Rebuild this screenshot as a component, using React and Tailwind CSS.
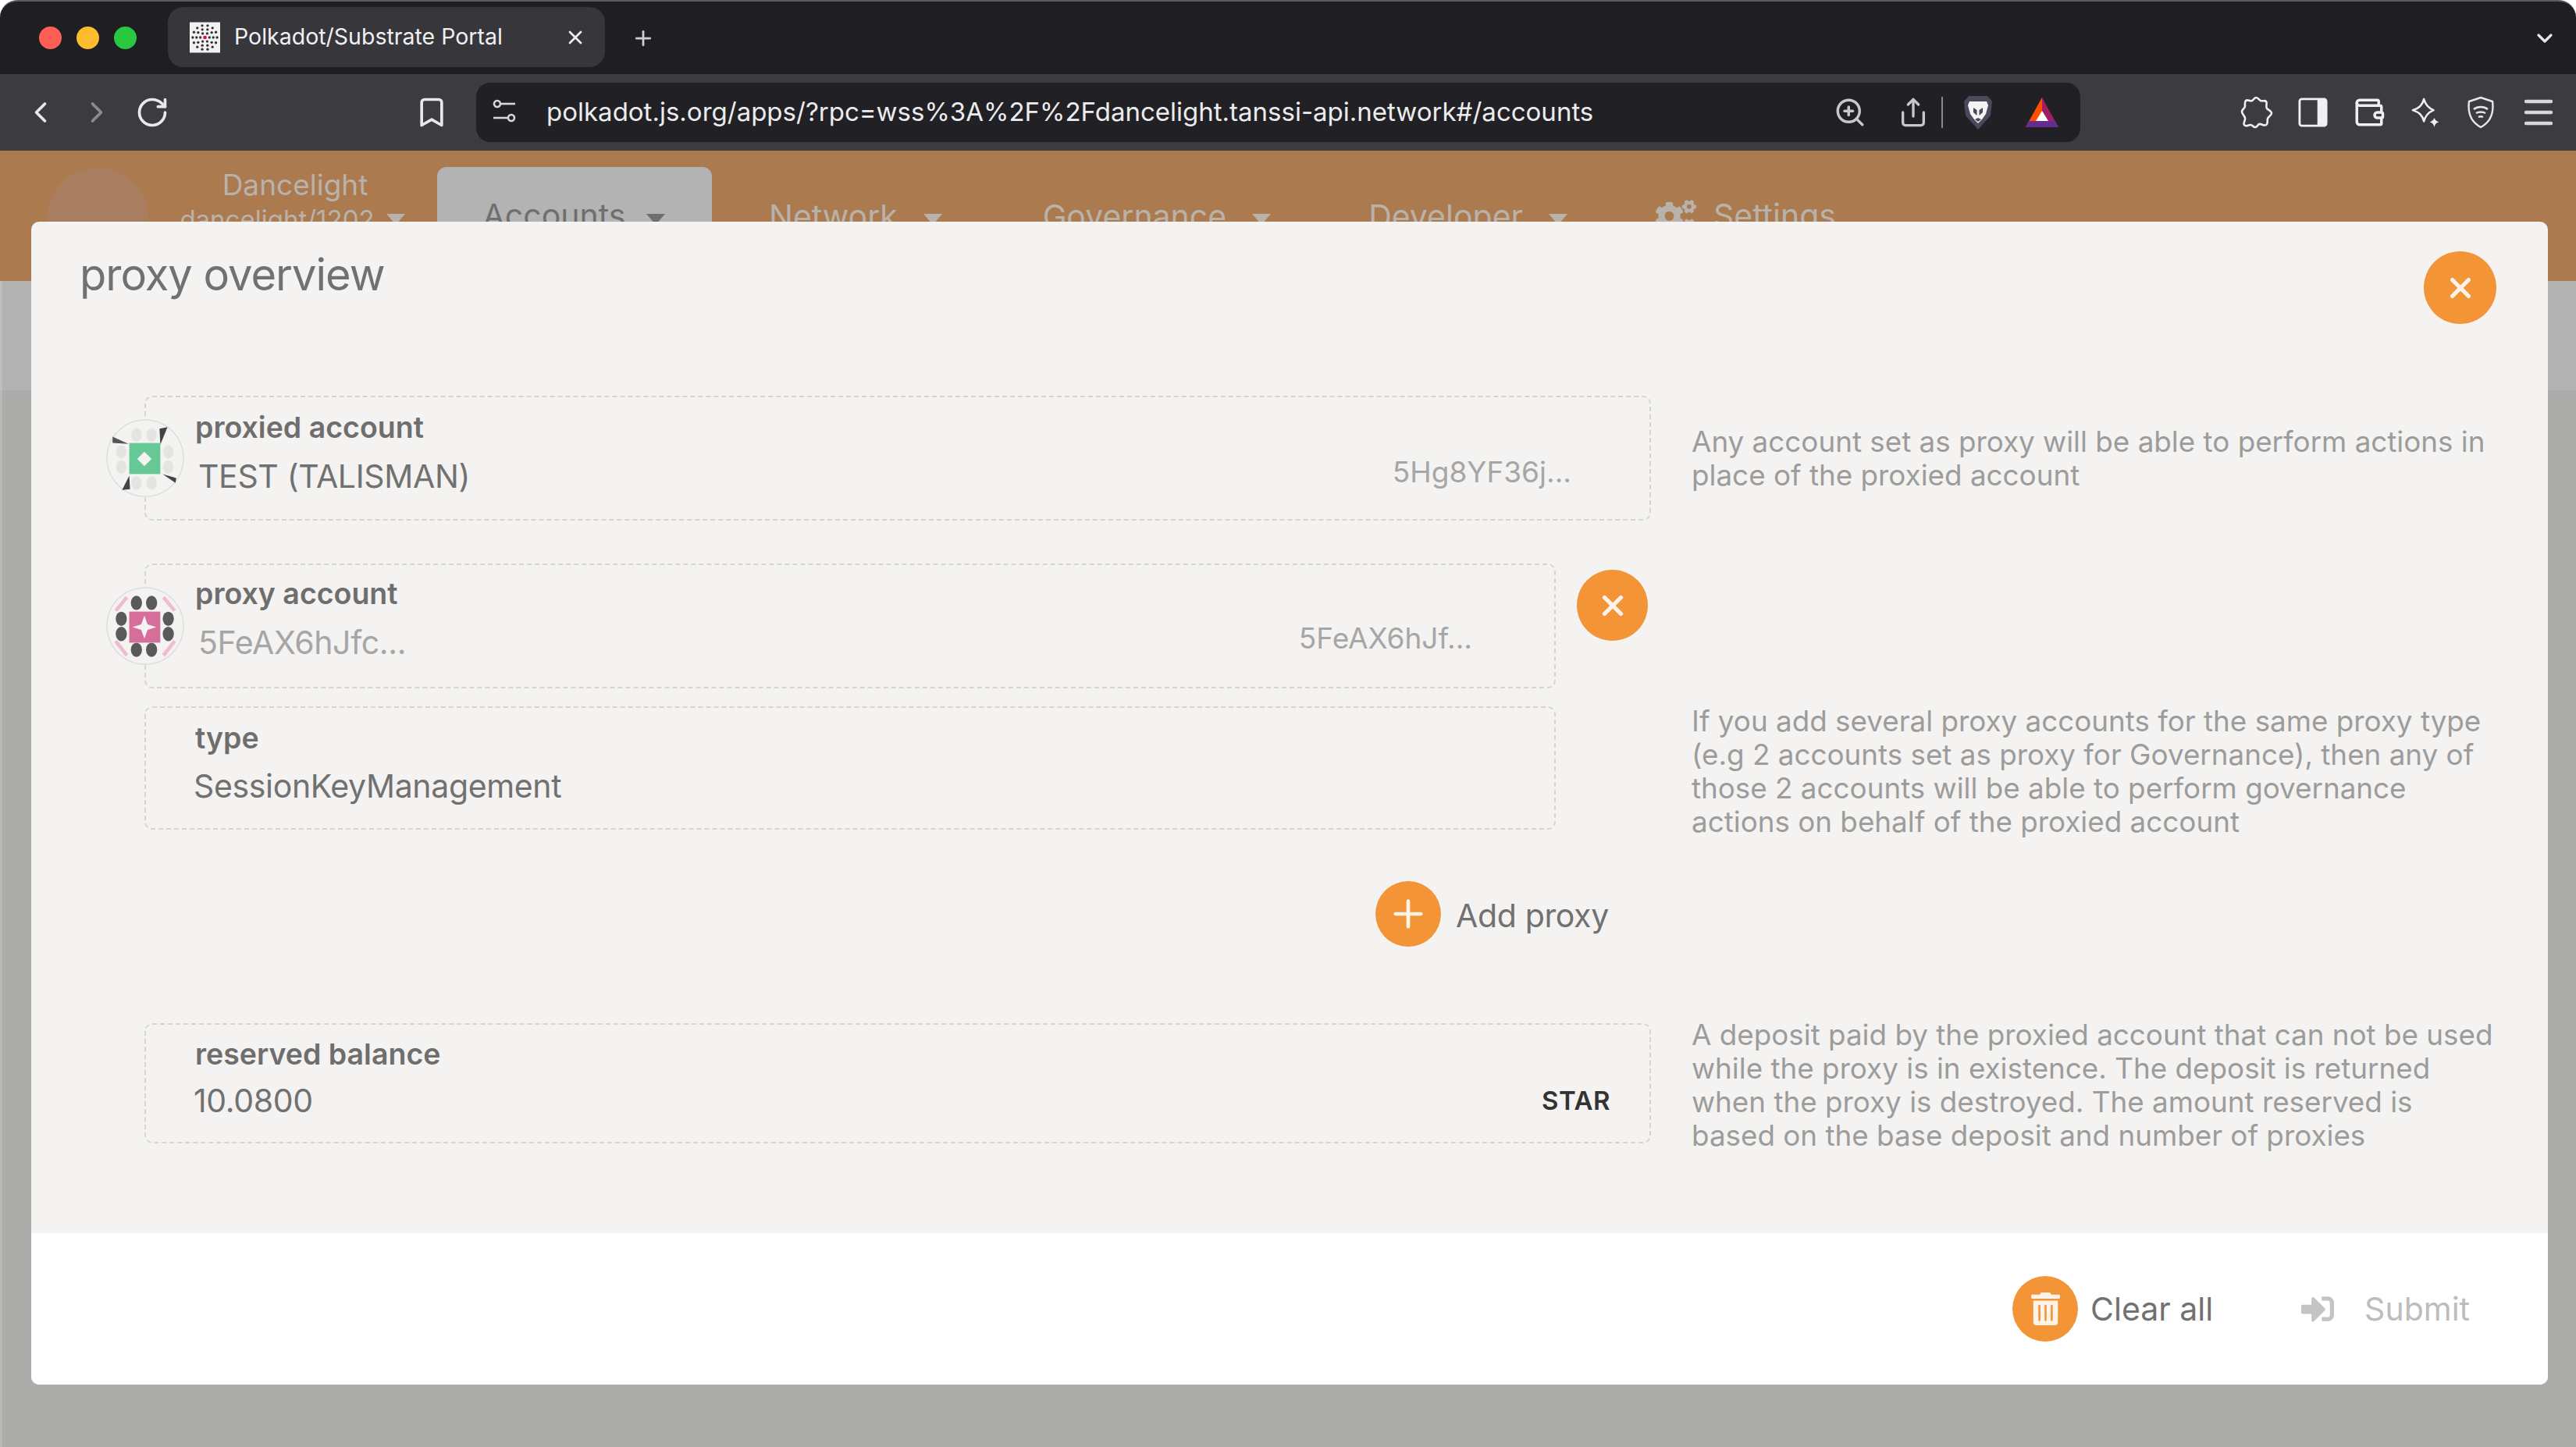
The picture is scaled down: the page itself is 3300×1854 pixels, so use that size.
import { ChevronLeft, ChevronRight, RotateCw, Bookmark, ZoomIn, Share, Wallet, Menu, X, Plus, ChevronDown } from 'lucide-react'
import { FaTrashAlt, FaSignInAlt, FaCogs } from 'react-icons/fa'

const FONT = "font-['Inter','Noto_Sans',sans-serif]"

function Caret({ className }) {
  return (
    <svg viewBox="0 0 24 14" className={className}>
      <path d="M0 0H24L12 14Z" fill="currentColor" />
    </svg>
  )
}

function Favicon() {
  const dots = []
  for (let r = 0; r < 3; r++) {
    const count = [6, 10, 14][r]
    for (let i = 0; i < count; i++) {
      const a = (i / count) * Math.PI * 2
      dots.push(<circle key={`${r}-${i}`} cx={20 + Math.cos(a) * (6 + r * 5)} cy={20 + Math.sin(a) * (6 + r * 5)} r="1.7" fill="#333" />)
    }
  }
  return (
    <svg viewBox="0 0 40 40" className="h-[40px] w-[39px]">
      <rect width="40" height="40" fill="#f2f2f2" />
      {dots}
      <circle cx="20" cy="20" r="2.4" fill="#e6007a" />
    </svg>
  )
}

function SiteSettingsIcon() {
  return (
    <svg viewBox="0 0 32 36" className="h-[36px] w-[32px]" fill="none" stroke="#d8d8d8" strokeWidth="2.6">
      <circle cx="7" cy="7" r="4" />
      <path d="M12 7H30" />
      <path d="M2 25H20" />
      <circle cx="25" cy="25" r="4" />
    </svg>
  )
}

function BraveIcon() {
  return (
    <svg viewBox="0 0 36 44" className="h-[44px] w-[36px]">
      <path d="M6 1H30L36 8L34 26L18 44L2 26L0 8Z" fill="#4a4a5c" />
      <path d="M7 8H29L31 13L28 24L23 31L18 36L13 31L8 24L5 13Z" fill="#f4f4f4" />
      <path d="M12 16L16.5 19V26L12 22ZM24 16L19.5 19V26L24 22Z" fill="#4a4a5c" />
      <path d="M14 31L18 29L22 31L18 34Z" fill="#4a4a5c" />
    </svg>
  )
}

function BatIcon() {
  return (
    <svg viewBox="0 0 42 38" className="h-[38px] w-[42px]">
      <path d="M21 0L42 38H0Z" fill="#9e1f63" />
      <path d="M21 0L0 38H12L21 20Z" fill="#ff5000" />
      <path d="M0 38L4 30H38L42 38Z" fill="#662d91" />
      <path d="M21 17L29 30H13Z" fill="#ffffff" />
    </svg>
  )
}

function ExtensionsIcon() {
  return (
    <svg viewBox="0 0 42 42" className="h-[42px] w-[42px]" fill="none" stroke="#f0f0f2" strokeWidth="2.6" strokeLinejoin="round">
      <path d="M15 6C17 5 18 2 20 2C23 2 24 5 26 6C29 7 31 5 33 7C35 9 32 13 34 16C36 18 40 19 40 22C40 25 36 26 35 29C34 32 36 35 33 37C30 39 27 35 24 36C22 37 22 40 19 40C16 40 16 37 13 37C10 37 7 40 5 37C3 35 7 31 6 28C5 25 2 23 2 20C2 17 6 16 6 13C6 10 5 8 7 6C9 4 12 7 15 6Z" />
    </svg>
  )
}

function SidebarIcon() {
  return (
    <svg viewBox="0 0 40 40" className="h-[38px] w-[38px]">
      <rect x="2" y="2" width="36" height="36" rx="3" fill="none" stroke="#f0f0f2" strokeWidth="3" />
      <rect x="26" y="2" width="12" height="36" fill="#f0f0f2" />
    </svg>
  )
}

function SparkleIcon() {
  return (
    <svg viewBox="0 0 42 42" className="h-[40px] w-[40px]" fill="none" stroke="#f0f0f2" strokeWidth="2.6">
      <path d="M18 3C20 11 24 15 31 18C24 21 20 25 18 33C16 25 12 21 3 18C12 15 16 11 18 3Z" strokeLinejoin="round" />
      <path d="M32 28C33 31 34 32 38 34C34 35 33 37 32 41C31 37 30 35 26 34C30 32 31 31 32 28Z" fill="#f0f0f2" stroke="none" />
    </svg>
  )
}

function ShieldWifiIcon() {
  return (
    <svg viewBox="0 0 36 42" className="h-[42px] w-[36px]" fill="none" stroke="#e8e8ea" strokeWidth="2.4">
      <path d="M18 2L33 7C35 22 31 33 18 40C5 33 1 22 3 7Z" strokeLinejoin="round" />
      <path d="M9 17C14 13 22 13 27 17" />
      <path d="M12 22C15 20 21 20 24 22" />
      <path d="M15 27C17 26 19 26 21 27" />
    </svg>
  )
}

// Polkadot identicons, drawn as in the picture
function GreenIdenticon() {
  return (
    <svg viewBox="0 0 98 98" className="h-full w-full">
      <circle cx="49" cy="49" r="48" fill="#f4f3f1" stroke="#dddddb" strokeWidth="1.4" />
      {[[38, 20], [57, 20], [19, 41], [19, 60], [78, 41], [78, 60], [38, 80], [57, 80]].map(([x, y]) => (
        <ellipse key={`${x}-${y}`} cx={x} cy={y} rx="6.5" ry="8.5" fill="#e4e4e3" />
      ))}
      <path d="M8 22L28 31L8 30Z" fill="#555555" />
      <path d="M77 10L67 12L68 32Z" fill="#444444" />
      <path d="M71 69L88 74L87 80Z" fill="#444444" />
      <path d="M29 71L20 89L30 88Z" fill="#444444" />
      <rect x="29" y="30" width="39" height="39" fill="#66c995" />
      <path d="M48 41L57 50L48 59L39 50Z" fill="#f4f3f1" />
    </svg>
  )
}

function PinkIdenticon() {
  return (
    <svg viewBox="0 0 98 98" className="h-full w-full">
      <circle cx="49" cy="49" r="48" fill="#f4f3f1" stroke="#dddddb" strokeWidth="1.4" />
      <path d="M12 30L26 13M86 30L72 13M12 68L26 86M86 68L72 86" stroke="#efbccf" strokeWidth="4.5" />
      {[[38, 20], [57, 20], [19, 40], [19, 59], [78, 40], [78, 59], [38, 79], [57, 79]].map(([x, y]) => (
        <ellipse key={`${x}-${y}`} cx={x} cy={y} rx="7" ry="9" fill="#5a5a5a" />
      ))}
      <rect x="29" y="31" width="39" height="39" fill="#d56f99" />
      <path d="M48 36L52 47L63 50.5L52 54L48 65L44 54L33 50.5L44 47Z" fill="#f4f3f1" />
    </svg>
  )
}

function NavItem({ label, className }) {
  return (
    <div className={`flex items-center text-[41px] leading-[50px] text-[#b9b2ab] ${className}`}>
      <span>{label}</span>
      <Caret className="ml-[32px] mt-[8px] h-[14px] w-[26px]" />
    </div>
  )
}

function Field({ className = '', children }) {
  return (
    <div className={`relative rounded-[10px] border-2 border-dashed border-[#d6d5d3] ${className}`}>
      {children}
    </div>
  )
}

function RoundButton({ size, children }) {
  return (
    <div className={`flex shrink-0 items-center justify-center rounded-full bg-[#f39436] text-[#fdf3e9] ${size}`}>
      {children}
    </div>
  )
}

function Label({ children }) {
  return <div className="text-[37.5px] font-semibold leading-[40px] text-[#6e6e6e]">{children}</div>
}

function Value({ className = '', children }) {
  return <div className={`text-[41px] leading-[50px] tracking-[-0.35px] ${className}`}>{children}</div>
}

function Help({ className = '', children }) {
  return <p className={`ml-[52px] w-[1040px] text-[36.8px] leading-[43px] text-[#9c9c9c] ${className}`}>{children}</p>
}

export default function App() {
  return (
    <div className={`relative flex h-[1854px] w-[3300px] flex-col overflow-hidden bg-white ${FONT}`}>
      {/* Tab strip */}
      <div className="flex h-[95px] shrink-0 items-center rounded-t-[22px] border-t-2 border-[#5c5c5e] bg-[#1f1f23] pl-[50px] pr-[24px]">
        <div className="flex gap-[19px]">
          <span className="h-[29px] w-[29px] rounded-full bg-[#ff5f57]" />
          <span className="h-[29px] w-[29px] rounded-full bg-[#febc2e]" />
          <span className="h-[29px] w-[29px] rounded-full bg-[#2ac840]" />
        </div>
        <div className="ml-[40px] mb-[2px] flex h-[77px] w-[560px] items-center rounded-[20px] bg-[#36363b] pl-[28px] pr-[24px]">
          <Favicon />
          <span className="ml-[18px] text-[28.5px] text-[#f0f0f2]">Polkadot/Substrate Portal</span>
          <X className="ml-auto h-[28px] w-[28px] text-[#f0f0f2]" strokeWidth={2.4} />
        </div>
        <Plus className="ml-[34px] h-[30px] w-[30px] text-[#d0d0d2]" strokeWidth={2.2} />
        <ChevronDown className="ml-auto h-[32px] w-[32px] text-[#e8e8ea]" strokeWidth={2.4} />
      </div>

      {/* Toolbar */}
      <div className="flex h-[98px] shrink-0 items-center bg-[#3b3b40] pl-[30px]">
        <ChevronLeft className="h-[44px] w-[44px] text-[#e8e8ea]" strokeWidth={2} />
        <ChevronRight className="ml-[28px] h-[44px] w-[44px] text-[#8c8c90]" strokeWidth={2} />
        <RotateCw className="ml-[27px] h-[44px] w-[44px] text-[#e8e8ea]" strokeWidth={2} />
        <Bookmark className="ml-[314px] h-[44px] w-[44px] text-[#e8e8ea]" strokeWidth={2} />
        <div className="ml-[35px] flex h-[76px] w-[2055px] items-center rounded-[18px] bg-[#212125] pl-[20px]">
          <SiteSettingsIcon />
          <span className="ml-[38px] text-[33px] text-[#ececee]">polkadot.js.org/apps/?rpc=wss%3A%2F%2Fdancelight.tanssi-api.network#/accounts</span>
          <ZoomIn className="ml-auto h-[42px] w-[42px] text-[#c8c8ca]" strokeWidth={2} />
          <Share className="ml-[40px] h-[40px] w-[40px] text-[#c8c8ca]" strokeWidth={2} />
          <span className="ml-[16px] h-[40px] w-[2px] bg-[#8a8a8c]" />
          <div className="ml-[27px]"><BraveIcon /></div>
          <div className="ml-[43px] mr-[28px]"><BatIcon /></div>
        </div>
        <div className="ml-[205px] flex items-center gap-[32px]">
          <ExtensionsIcon />
          <SidebarIcon />
          <Wallet className="h-[42px] w-[42px] text-[#f0f0f2]" strokeWidth={2} />
          <SparkleIcon />
          <ShieldWifiIcon />
          <Menu className="h-[48px] w-[48px] text-[#d8d8da]" strokeWidth={2.2} />
        </div>
      </div>

      {/* Dimmed app header behind the modal */}
      <div className="flex h-[167px] shrink-0 bg-[#ab7a4f]">
        <div className="ml-[60px] mt-[22px] h-[130px] w-[130px] rounded-full bg-[#a97e60]" />
        <div className="ml-[30px] mt-[22px] flex w-[310px] flex-col items-center text-[37px] leading-[44px] text-[#b9b2ab]">
          <span className="ml-[6px]">Dancelight</span>
          <div className="flex items-center text-[33px]">
            <span>dancelight/1202</span>
            <Caret className="ml-[14px] h-[14px] w-[26px]" />
          </div>
        </div>
        <div className="ml-[30px] mt-[21px] flex h-[146px] w-[352px] justify-center rounded-t-[12px] bg-[#b3b3b3] pt-[38px] text-[#6f6f6f]">
          <div className="flex h-[50px] items-center text-[41px]">
            <span>Accounts</span>
            <Caret className="ml-[26px] mt-[8px] h-[14px] w-[26px]" />
          </div>
        </div>
        <NavItem label="Network" className="ml-[73px] mt-[59px] h-[50px]" />
        <NavItem label="Governance" className="ml-[128px] mt-[59px] h-[50px]" />
        <NavItem label="Developer" className="ml-[124px] mt-[59px] h-[50px]" />
        <div className="ml-[112px] mt-[59px] flex h-[50px] items-center text-[41px] text-[#b9b2ab]">
          <FaCogs className="h-[50px] w-[52px]" />
          <span className="ml-[22px]">Settings</span>
        </div>
      </div>
      <div className="h-[140px] shrink-0 bg-[#b3b3b3]" />
      <div className="flex-1 bg-[#acacaa]" />

      {/* Lighter window edge */}
      <div className="absolute bottom-0 left-0 top-[360px] w-[3px] bg-white/15" />

      {/* Modal */}
      <div className="absolute left-[40px] top-[284px] flex h-[1490px] w-[3224px] flex-col overflow-hidden rounded-[10px] bg-[#f4f3f1]">
        <div className="flex h-[1296px] flex-col pl-[145px]">
          <div className="flex h-[223px] items-start">
            <h1 className="ml-[-83px] mt-[36px] text-[56px] leading-[64px] tracking-[-1px] text-[#717171]">proxy overview</h1>
            <div className="absolute left-[3065px] top-[38px]">
              <RoundButton size="h-[93px] w-[93px]"><X className="h-[42px] w-[42px]" strokeWidth={3} /></RoundButton>
            </div>
          </div>

          {/* Proxied account */}
          <div className="flex h-[160px]">
            <Field className="flex w-[1930px] justify-between pl-[63px] pr-[100px] pt-[19px]">
              <div className="absolute left-[-51px] top-[28px] h-[100px] w-[100px]"><GreenIdenticon /></div>
              <div>
                <Label>proxied account</Label>
                <Value className="ml-[4px] mt-[17px] text-[#717171]">TEST (TALISMAN)</Value>
              </div>
              <div className="mt-[54px] text-[37px] leading-[46px] text-[#a6a6a6]">5Hg8YF36j...</div>
            </Field>
            <Help className="mt-[37px]">Any account set as proxy will be able to perform actions in place of the proxied account</Help>
          </div>

          {/* Proxy account and type */}
          <div className="mt-[55px] flex h-[589px]">
            <div className="w-[1930px]">
              <div className="flex items-start justify-between">
                <Field className="flex h-[160px] w-[1808px] justify-between pl-[63px] pr-[105px] pt-[17px]">
                  <div className="absolute left-[-51px] top-[28px] h-[100px] w-[100px]"><PinkIdenticon /></div>
                  <div>
                    <Label>proxy account</Label>
                    <Value className="ml-[4px] mt-[17px] text-[#a6a6a6]">5FeAX6hJfc...</Value>
                  </div>
                  <div className="mt-[54px] text-[37px] leading-[46px] text-[#a6a6a6]">5FeAX6hJf...</div>
                </Field>
                <div className="mr-[4px] mt-[8px]">
                  <RoundButton size="h-[91px] w-[91px]"><X className="h-[42px] w-[42px]" strokeWidth={3} /></RoundButton>
                </div>
              </div>
              <Field className="mt-[23px] h-[158px] w-[1808px] pl-[63px] pt-[19px]">
                <Label>type</Label>
                <Value className="ml-[-2px] mt-[16px] text-[#717171]">SessionKeyManagement</Value>
              </Field>
              <div className="mt-[66px] flex items-center pl-[1577px]">
                <RoundButton size="h-[84px] w-[84px]"><Plus className="h-[56px] w-[56px]" strokeWidth={2} /></RoundButton>
                <Value className="ml-[19px] mt-[3px] text-[#717171]">Add proxy</Value>
              </div>
            </div>
            <Help className="mt-[180px]">If you add several proxy accounts for the same proxy type (e.g 2 accounts set as proxy for Governance), then any of those 2 accounts will be able to perform governance actions on behalf of the proxied account</Help>
          </div>

          {/* Reserved balance */}
          <div className="flex h-[154px]">
            <Field className="w-[1930px] pl-[63px] pt-[18px]">
              <Label>reserved balance</Label>
              <div className="flex items-center justify-between pr-[50px]">
                <Value className="ml-[-2px] mt-[13px] text-[#717171]">10.0800</Value>
                <span className="mt-[15px] text-[33px] font-semibold tracking-[0.5px] text-[#333333]">STAR</span>
              </div>
            </Field>
            <Help className="mt-[-7px]">A deposit paid by the proxied account that can not be used while the proxy is in existence. The deposit is returned when the proxy is destroyed. The amount reserved is based on the base deposit and number of proxies</Help>
          </div>
        </div>

        {/* Footer */}
        <div className="flex flex-1 items-center justify-end bg-white pr-[100px]">
          <RoundButton size="h-[84px] w-[84px]"><FaTrashAlt className="h-[42px] w-[37px]" /></RoundButton>
          <span className="ml-[16px] mt-[2px] text-[41px] text-[#717171]">Clear all</span>
          <FaSignInAlt className="ml-[112px] h-[42px] w-[44px] text-[#c4c4c4]" />
          <span className="ml-[38px] mt-[2px] text-[41px] text-[#bdbdbd]">Submit</span>
        </div>
      </div>
    </div>
  )
}
